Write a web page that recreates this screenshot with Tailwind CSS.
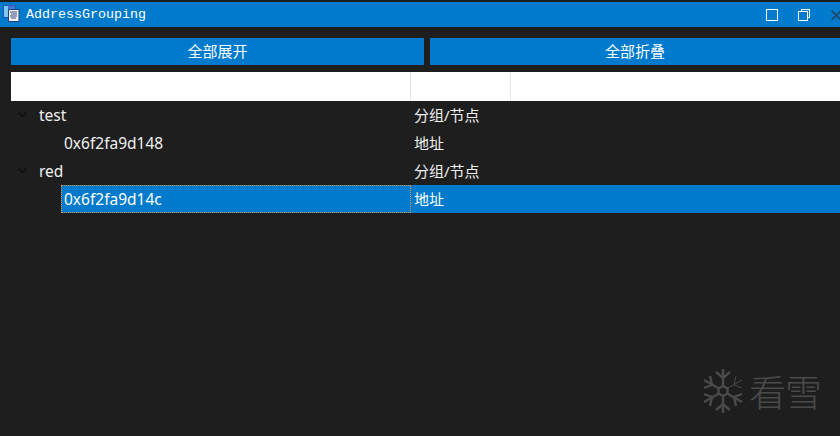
<!DOCTYPE html>
<html>
<head>
<meta charset="utf-8">
<script src="https://cdn.jsdelivr.net/npm/@tailwindcss/browser@4"></script>
</head>
<body class="m-0 overflow-hidden bg-[#1e1e1e]">
<div class="relative flex h-[436px] w-[840px] flex-col overflow-hidden bg-[#1e1e1e] pt-[2px] font-['Noto_Sans','Noto_Sans_CJK_SC',sans-serif] text-[15.5px] text-[#f1f1f1]">
  <!-- title bar -->
  <div class="flex h-[25px] shrink-0 items-center bg-[#007acc] pl-[3px]">
    <svg class="mb-[2px] h-[17px] w-[17px] shrink-0" viewBox="0 0 17 17">
      <rect x="0.5" y="0.5" width="12" height="12" fill="#3f78d8" stroke="#2a55b0"/>
      <rect x="1" y="1" width="4" height="11" fill="#7cc8f0"/>
      <rect x="5.5" y="4.5" width="10.5" height="12" fill="#eef2fa" stroke="#26407e"/>
      <path d="M7 7h7M8 9h6M7 11h7M8 13h5" stroke="#3b4a78"/>
    </svg>
    <span class="ml-[6px] font-['Liberation_Mono',monospace] text-[13.33px] text-white">AddressGrouping</span>
    <div class="ml-auto flex h-full items-center">
      <div class="h-[12px] w-[12px] border border-white"></div>
      <div class="relative ml-[20px] h-[12px] w-[12px]">
        <div class="absolute right-0 top-0 h-[9px] w-[9px] border border-white"></div>
        <div class="absolute bottom-0 left-0 h-[10px] w-[10px] border border-white bg-[#007acc]"></div>
      </div>
      <svg class="ml-[21px] mr-[-1px] h-[12px] w-[10px]" viewBox="0 0 10 12">
        <path d="M0.5 1.5L10 11M10 1.5L0.5 11" stroke="#1e4a6d" stroke-width="1.8"/>
      </svg>
    </div>
  </div>
  <!-- buttons -->
  <div class="mt-[11px] flex h-[27px] shrink-0 gap-[6px] pl-[11px]">
    <div class="flex w-[413px] items-center justify-center bg-[#007acc] pb-[1px] text-[15px] text-white">全部展开</div>
    <div class="flex w-[410px] items-center justify-center bg-[#007acc] pb-[1px] text-[15px] text-white">全部折叠</div>
  </div>
  <!-- tree -->
  <div class="mt-[7px] flex h-[29px] shrink-0 pl-[11px]">
    <div class="w-[400px] border-r border-[#e5e5e5] bg-white"></div>
    <div class="w-[100px] border-r border-[#e5e5e5] bg-white"></div>
    <div class="flex-1 bg-white"></div>
  </div>
  <div class="flex h-[28px] shrink-0 items-center">
    <div class="flex w-[410px] items-center">
      <svg class="ml-[18px] h-[6px] w-[9px]" viewBox="0 0 9 6"><path d="M0.5 0.5L4.5 4.5L8.5 0.5" fill="none" stroke="#0d0d0d" stroke-width="1.3"/></svg>
      <span class="ml-[12px] pt-[1px]">test</span>
    </div>
    <span class="ml-[4px] text-[15px]">分组/节点</span>
  </div>
  <div class="flex h-[28px] shrink-0 items-center">
    <div class="w-[410px] pl-[64px] pt-[1px]">0x6f2fa9d148</div>
    <span class="ml-[4px] text-[15px]">地址</span>
  </div>
  <div class="flex h-[28px] shrink-0 items-center">
    <div class="flex w-[410px] items-center">
      <svg class="ml-[18px] h-[6px] w-[9px]" viewBox="0 0 9 6"><path d="M0.5 0.5L4.5 4.5L8.5 0.5" fill="none" stroke="#0d0d0d" stroke-width="1.3"/></svg>
      <span class="ml-[12px] pt-[1px]">red</span>
    </div>
    <span class="ml-[4px] text-[15px]">分组/节点</span>
  </div>
  <div class="flex h-[28px] shrink-0 pl-[61px]">
    <div class="flex w-[350px] items-center border border-dotted border-[#e0964a] bg-[#007acc] pl-[2px] pt-[1px] text-white">0x6f2fa9d14c</div>
    <div class="flex flex-1 items-center bg-[#007acc] pl-[3px] text-[15px] text-white">地址</div>
  </div>
  <!-- watermark -->
  <div class="absolute left-[702px] top-[369px] flex items-center text-[#4a4a4a]">
    <svg class="h-[44px] w-[42px]" viewBox="0 0 42 44" fill="none" stroke="#4a4a4a" stroke-width="2.4">
      <path d="M21 0V17M21 27V44M2 11L17 19.5M25 24.5L40 33M2 33L17 24.5"/>
      <path d="M25 19.5L40 11" stroke-width="1"/>
      <path d="M14 3L21 9L28 3M14 41L21 35L28 41M2 19L10 16L8 7M2 25L10 28L8 37M40 25L32 28L34 37"/>
      <path d="M40 19L32 16L34 7" stroke-width="1"/>
      <path d="M21 17L25.5 19.5V24.5L21 27L16.5 24.5V19.5Z"/>
    </svg>
    <span class="ml-[5px] font-['Noto_Sans_CJK_SC',sans-serif] text-[37px] font-light leading-none tracking-[-1px]">看雪</span>
  </div>
</div>
</body>
</html>
